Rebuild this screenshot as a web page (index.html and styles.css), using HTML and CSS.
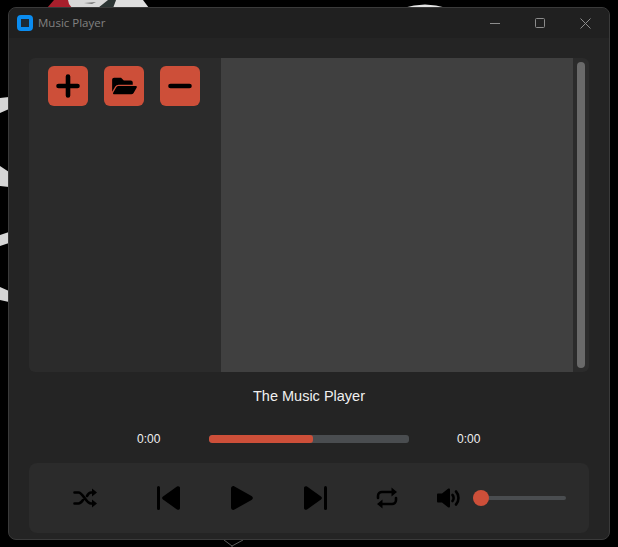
FILE: index.html
```html
<!DOCTYPE html>
<html>
<head>
    <title>Music Player</title>
    <link rel="stylesheet" href="styles.css">
</head>
<body>
    <svg class="wallpaper" width="618" height="547" viewBox="0 0 618 547">
        <path d="M60 0 H112 L98 8 H70 Z" fill="#d8d8d8"/>
        <path d="M47 8 L54 0 H68 L69 4 L72 8 Z" fill="#a81f2c"/>
        <path d="M84 3 L96 2 L92 4 Z" fill="#777"/>
        <path d="M98 8 L108 0 H116 L113 8 Z" fill="#2c3534"/>
        <path d="M113 8 L116 0 H143 L149 8 Z" fill="#dedede"/>
        <path d="M403 8 Q425 1 447 8 Z" fill="#e4e4e4"/>
        <path d="M0 98 L9 97 V109 L0 113 Z" fill="#d6d6d6"/>
        <path d="M0 166 L9 172 V187 L0 186 Z" fill="#d6d6d6"/>
        <path d="M0 235 L9 232 V243 L0 246 Z" fill="#d6d6d6"/>
        <path d="M0 287 L9 291 V302 L0 300 Z" fill="#d6d6d6"/>
        <path d="M224 540 L232 546 L243 540 M232 546 V547" fill="none" stroke="#5c5c5c" stroke-width="1"/>
    </svg>

    <div class="window">
        <div class="titlebar">
            <span class="app-icon"></span>
            <span class="app-title">Music Player</span>
            <div class="win-controls">
                <svg width="10" height="10" viewBox="0 0 10 10"><path d="M0 5.500H10"/></svg>
                <svg width="10" height="10" viewBox="0 0 10 10"><rect x="0.500" y="0.500" width="9" height="9" rx="1"/></svg>
                <svg width="11" height="11" viewBox="0 0 11 11"><path d="M0.500 0.500L10.500 10.500M10.500 0.500L0.500 10.500"/></svg>
            </div>
        </div>

        <div class="content">
            <div class="library">
                <div class="sidebar">
                    <button class="tool-btn">
                        <svg width="24" height="24" viewBox="0 0 24 24"><path class="thick" d="M12 2.500V21.500M2.500 12H21.500"/></svg>
                    </button>
                    <button class="tool-btn">
                        <svg width="25" height="22" viewBox="0 0 576 512"><path d="M572.694 292.093L500.27 416.248A63.997 63.997 0 0 1 444.989 448H45.025c-18.523 0-30.064-20.093-20.731-36.093l72.424-124.155A64 64 0 0 1 152 256h399.964c18.523 0 30.064 20.093 20.73 36.093zM152 224h328v-48c0-26.51-21.49-48-48-48H272l-64-64H48C21.49 64 0 85.49 0 112v278.046l69.077-118.418C86.214 242.25 117.989 224 152 224z"/></svg>
                    </button>
                    <button class="tool-btn">
                        <svg width="24" height="24" viewBox="0 0 24 24"><path class="thick" d="M2.500 12H21.500"/></svg>
                    </button>
                </div>
                <div class="playlist"></div>
                <div class="scrollbar"><div class="scroll-thumb"></div></div>
            </div>

            <p class="song-title">The Music Player</p>

            <div class="progress-row">
                <span class="time">0:00</span>
                <div class="progress"><div class="progress-fill"></div></div>
                <span class="time">0:00</span>
            </div>

            <div class="controls">
                <svg class="ctl shuffle" width="24" height="24" viewBox="0 0 24 24">
                    <path class="line" d="M1.500 6.500H5.500C10 6.500 13 17.500 18 17.500H21M1.500 17.500H5.500C7.500 17.500 9 15.500 10 14M14 10C15 8.200 16.300 6.500 18 6.500H21"/>
                    <path d="M19 2.500L24 6.500L19 10.500ZM19 13.500L24 17.500L19 21.500Z" class="solid"/>
                </svg>
                <svg class="ctl prev" width="24" height="24" viewBox="0 0 24 24">
                    <path class="solid" d="M1.500 0A1.500 1.500 0 0 1 3 1.500V22.500A1.500 1.500 0 0 1 0 22.500V1.500A1.500 1.500 0 0 1 1.500 0Z"/>
                    <path class="solid" d="M6 10.500L20 0.500C21.500 -0.300 23 0.500 23 2V22C23 23.500 21.500 24.300 20 23.500L6 13.500C4.800 12.600 4.800 11.400 6 10.500Z"/>
                </svg>
                <svg class="ctl play" width="24" height="24" viewBox="0 0 24 24">
                    <path class="solid" d="M1 2.500C1 0.500 3 -0.500 4.500 0.500L21.500 10C23.300 11 23.300 13 21.500 14L4.500 23.500C3 24.500 1 23.500 1 21.500Z"/>
                </svg>
                <svg class="ctl next" width="24" height="24" viewBox="0 0 24 24">
                    <path class="solid" d="M18 10.500L4 0.500C2.500 -0.300 1 0.500 1 2V22C1 23.500 2.500 24.300 4 23.500L18 13.500C19.200 12.600 19.200 11.400 18 10.500Z"/>
                    <path class="solid" d="M22.500 0A1.500 1.500 0 0 1 24 1.500V22.500A1.500 1.500 0 0 1 21 22.500V1.500A1.500 1.500 0 0 1 22.500 0Z"/>
                </svg>
                <svg class="ctl repeat" width="24" height="24" viewBox="0 0 24 24">
                    <path class="line" d="M3 12V10C3 7.500 5 6 7 6H18M21 12V14C21 16.500 19 18 17 18H6"/>
                    <path class="solid" d="M16.500 1.500L22 6L16.500 10.500ZM7.500 13.500L2 18L7.500 22.500Z"/>
                </svg>
                <svg class="ctl volume" width="24" height="24" viewBox="0 0 24 24">
                    <path class="solid" d="M0 8.500C0 8 0.500 7.500 1 7.500H5L11 2.800C12 2 13 2.500 13 3.800V20.200C13 21.500 12 22 11 21.200L5 16.500H1C0.500 16.500 0 16 0 15.500Z"/>
                    <path class="line" d="M15.500 9C17 10.500 17 13.500 15.500 15M19 5.500C22.300 9 22.300 15 19 18.500"/>
                </svg>
                <div class="volume-slider">
                    <div class="volume-track"></div>
                    <div class="volume-knob"></div>
                </div>
            </div>
        </div>
    </div>
</body>
</html>
```
FILE: styles.css
```css
* {
    margin: 0;
    padding: 0;
    box-sizing: border-box;
}
body {
    width: 618px;
    height: 547px;
    overflow: hidden;
    position: relative;
    background: #000;
    font-family: "Liberation Sans", Arial, sans-serif;
    color: #fff;
}
.wallpaper {
    position: absolute;
    left: 0;
    top: 0;
}
.window {
    position: absolute;
    left: 8px;
    top: 7px;
    width: 602px;
    height: 533px;
    display: flex;
    flex-direction: column;
    background: #242424;
    border: 1px solid #3a3a3a;
    border-radius: 8px;
    overflow: hidden;
}
.titlebar {
    height: 30px;
    flex: none;
    display: flex;
    align-items: center;
    padding-left: 8px;
    background: #202020;
}
.app-icon {
    width: 16px;
    height: 16px;
    border: 4px solid #0a8cf0;
    border-radius: 4px;
    background: #1c2a36;
    margin-right: 5px;
}
.app-title {
    font-family: "Open Sans", sans-serif;
    font-size: 11.5px;
    color: #808080;
    position: relative;
    top: -1px;
}
.win-controls {
    margin-left: auto;
    display: flex;
    align-items: center;
    gap: 35px;
    padding-right: 18px;
}
.win-controls svg {
    fill: none;
    stroke: #8c8c8c;
    stroke-width: 1;
}
.content {
    flex: 1;
    padding: 20px 20px 5px;
    display: flex;
    flex-direction: column;
}
.library {
    height: 314px;
    flex: none;
    display: flex;
    background: #2b2b2b;
    border-radius: 6px;
    overflow: hidden;
}
.sidebar {
    width: 192px;
    flex: none;
    display: flex;
    align-items: flex-start;
    gap: 16px;
    padding: 8px 19px;
}
.tool-btn {
    width: 40px;
    height: 40px;
    flex: none;
    display: flex;
    align-items: center;
    justify-content: center;
    background: #cd4f39;
    border: none;
    border-radius: 6px;
}
.tool-btn .thick {
    fill: none;
    stroke: #000;
    stroke-width: 4.600;
    stroke-linecap: round;
}
.playlist {
    width: 352px;
    flex: none;
    background: #404040;
}
.scrollbar {
    flex: 1;
    padding: 4px;
}
.scroll-thumb {
    height: 100%;
    background: #696969;
    border-radius: 4px;
}
.song-title {
    height: 48px;
    line-height: 48px;
    text-align: center;
    font-size: 14.5px;
    color: #f0f0f0;
}
.progress-row {
    height: 35px;
    flex: none;
    display: flex;
    align-items: center;
    padding-left: 108px;
    margin-top: 1px;
}
.time {
    width: 24px;
    font-size: 12px;
    color: #f0f0f0;
}
.progress {
    width: 200px;
    height: 8px;
    margin: 0 48px;
    background: #4a4d50;
    border-radius: 3px;
    overflow: hidden;
}
.progress-fill {
    width: 52%;
    height: 100%;
    background: #cd4f39;
    border-radius: 3px;
}
.controls {
    height: 70px;
    flex: none;
    margin-top: 7px;
    display: flex;
    align-items: center;
    padding-left: 44px;
    background: #2b2b2b;
    border-radius: 8px;
}
.ctl {
    flex: none;
}
.ctl .solid {
    fill: #000;
}
.ctl .line {
    fill: none;
    stroke: #000;
    stroke-width: 2.600;
    stroke-linecap: round;
}
.prev {
    margin-left: 60px;
}
.play,
.next {
    margin-left: 49px;
}
.repeat {
    margin-left: 48px;
}
.volume {
    margin-left: 38px;
}
.volume-slider {
    width: 93px;
    height: 16px;
    margin-left: 12px;
    position: relative;
    display: flex;
    align-items: center;
}
.volume-track {
    width: 100%;
    height: 4px;
    background: #4a4d50;
    border-radius: 2px;
}
.volume-knob {
    position: absolute;
    left: 0;
    top: 0;
    width: 16px;
    height: 16px;
    background: #cd4f39;
    border-radius: 50%;
}
```
